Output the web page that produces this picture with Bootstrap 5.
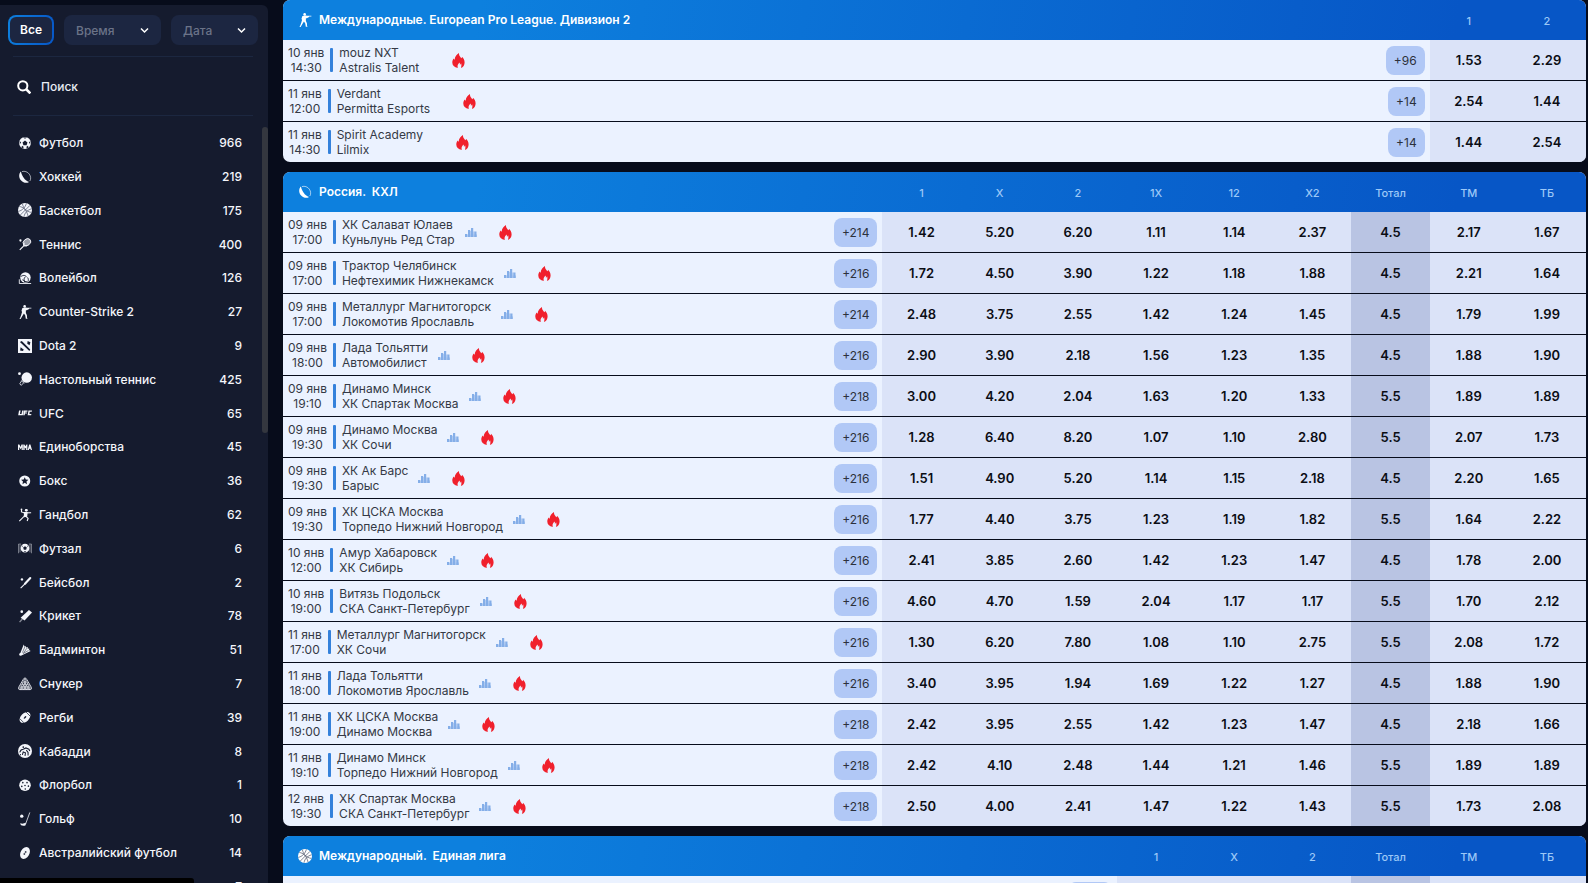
<!DOCTYPE html>
<html lang="ru" data-bs-theme="light">
<head>
<meta charset="utf-8">
<meta name="viewport" content="width=device-width, initial-scale=1">
<title>Линия</title>
<link href="https://cdn.jsdelivr.net/npm/bootstrap@5.3.0/dist/css/bootstrap.min.css" rel="stylesheet">
<style>
  body { background: #070c1b; font-family: Inter, "Liberation Sans", sans-serif; font-size: 12px; height: 100vh; overflow: hidden; }
  a { color: inherit; text-decoration: none; }
  .layout { height: 100vh; }

  .sports-panel { width: 268px; margin-top: 5px; background: #151b2e; border-top-right-radius: 6px; color: #f4f6fb; overflow: hidden; }
  .filters { padding: 10px 10px 11px 8px; gap: 10px; }
  .filters .btn, .filters .form-select { height: 30px; font-size: 12px; font-weight: 500; line-height: 16px; border-radius: 8px; }
  .filters .btn { width: 46px; padding: 0; color: #fff; border: 2px solid transparent; font-weight: 600;
    background: linear-gradient(#1c2641, #1c2641) padding-box, linear-gradient(100deg, #0d80de, #0756c6) border-box; }
  .filters .form-select { border: 0; padding: 1px 12px 0; color: #6b7388; background-color: #1c2641; background-position: right 12px center; background-size: 9px 7px;
    background-image: url("data:image/svg+xml,%3Csvg xmlns='http://www.w3.org/2000/svg' viewBox='0 0 9 7'%3E%3Cpath d='M1 1.5 4.5 5 8 1.5' fill='none' stroke='%23fff' stroke-width='1.5'/%3E%3C/svg%3E"); }
  .sel-time { width: 97px; }
  .sel-date { width: 87px; }
  .search-row { margin: 0 15px 0 13px; height: 60px; padding: 2px 0 0 4px; gap: 10px; border: solid #1c2740; border-width: 1px 0; }
  .search-row input { background: none; border: 0; outline: 0; color: #fff; font-size: 12px; font-weight: 500; padding: 0; min-width: 0; }
  .search-row input::placeholder { color: #e9ecf4; opacity: 1; }
  .sports-scroll { margin-top: 10px; }
  .sport-link { padding: 0 26px 0 18px; line-height: 2.6; font-size: 13px; font-weight: 500; }
  .sport-link::before { content: ""; height: 2.6em; }
  .sport-name, .sport-count { font-size: 12px; }
  .sport-link svg, .league-title svg { width: 14px; height: 14px; flex: none; fill: currentColor; stroke: none; }
  .sport-link svg { margin-right: 7px; }
  .scroll-thumb { top: 1px; right: 0; width: 6px; height: 306px; border-radius: 3px; background: #34373f; }
  .status-strip { left: 0; bottom: 0; width: 194px; height: 5px; background: #000; border-top-right-radius: 3px; }

  .board { margin: 0 2px 0 15px; gap: 10px; overflow: hidden; min-width: 0; }
  .league { border-radius: 7px; overflow: hidden; background: #ebf2ff; flex: none; }
  .league table { width: 100%; table-layout: fixed; border-collapse: separate; border-spacing: 0; }
  .league thead { background: linear-gradient(100deg, #0d80de 15%, #0756c6 90%); }
  .league th { height: 40px; padding: 3px 0 0; text-align: center; font-size: 11px; font-weight: 500; color: #9cc8f7; }
  .league th:first-child { padding: 0 0 0 15px; text-align: left; font-size: 12px; font-weight: 600; color: #fff; }
  .league-title { gap: 7px; white-space: pre; }
  .league td { height: 41px; padding: 0; border-bottom: 1px solid #070c1b; }
  .league tr:last-child td { height: 40px; border-bottom: 0; }
  .c-odd { width: 6%; }
  td.odd { background: #dbe3f8; text-align: center; }
  td.odd.total { background: #b9c4e3; }
  td.odd button { border: 0; background: none; width: 100%; padding: 2px 0 0; font-size: 13px; font-weight: 600; line-height: 16px; color: #0b0d14; }
  .event { padding: 0 5px; color: #343945; font-weight: 400; line-height: 15px; }
  .event time { text-align: center; }
  .event .bar { width: 3px; height: 24px; margin: 0 6px; border-radius: 1px; background: #3481db; }
  .event .stat { width: 12px; height: 10px; margin-left: 10px; fill: #84aee8; }
  .event .fire { width: 13px; height: 15px; margin-left: 22px; fill: #f0202c; }
  .event .no-stat { margin-left: 33px; }
  .more { padding: 0 8px; height: 29px; border: 0; border-radius: 8px; background: #b1c8f6; color: #2c313c; font-size: 12px; line-height: 29px; }
</style>
</head>
<body>
<svg class="d-none">
  <symbol id="i-football" viewBox="0 0 16 16"><path fill-rule="evenodd" d="M8 1.2a6.800 6.800 0 1 1 0 13.600A6.800 6.800 0 0 1 8 1.200Zm0 4L5.200 7.300l1 3.200h3.600l1-3.200ZM6 1.800 8 3.200l2-1.400ZM2 6.100 3.600 7 2.100 9.500Zm12 0L12.400 7l1.500 2.500ZM4 13l.6-2 1.800 1.200-.4 2Zm8 0-.6-2-1.800 1.200.4 2Z"/></symbol>
  <symbol id="i-hockey" viewBox="0 0 16 16"><path d="M3.400 1.600C.8 3.600.6 9 3.600 12c2.600 2.900 6.600 3.400 9 1.600-2.600-.8-4.600-2.400-6.100-4.700C5 6.600 3.800 4.300 3.400 1.600Z"/><path d="M4.500 1.800c3-1 6.600.3 8.400 2.900 2 2.700 2 6 .6 7.900" fill="none" stroke="currentColor" stroke-width=".7"/></symbol>
  <symbol id="i-basket" viewBox="0 0 16 16"><circle cx="8" cy="8" r="8"/><path d="M1.500 4c4 .3 8.500 4 10 11M5 .8c1 5 4.500 9 10.300 10M2.600 13.800 13.800 2.600M.5 9.500c4-.7 8-4.500 9-9M7 15.500c.4-4 4-7.800 8.500-8.800" fill="none" stroke="#4a5268" stroke-width=".8"/></symbol>
  <symbol id="i-tennis" viewBox="0 0 16 16"><circle cx="2.800" cy="4" r="1.300"/><ellipse cx="10.200" cy="6" rx="4.700" ry="3.700" transform="rotate(-40 10.200 6)" fill-opacity=".6" stroke="currentColor"/><path d="M7.200 9.600 2 14.800M7 6.500l-.6 3.800 4-.6" fill="none" stroke="currentColor" stroke-width="1.300"/></symbol>
  <symbol id="i-volley" viewBox="0 0 16 16"><circle cx="8.500" cy="7.500" r="6"/><path d="M3 6.500c3-2 5-2 7 .5M8 7c-1.500 2-1.500 4 0 6M5 10c2 1 3 2.500 6 2.500M11 7.500c1 1.500 1 3 .5 4.500" fill="none" stroke="#151b2e" stroke-width="1.100"/><path d="M1.500 9.500v4.800H15" fill="none" stroke="currentColor"/></symbol>
  <symbol id="i-cs" viewBox="0 0 16 16"><circle cx="7.600" cy="1.600" r="1.500"/><path d="M5 3.300 9 2.800l1.300.2h5v.9h-2.600v.7L10 6.100 9 6v3l1.200 2.600.2 3.400 1 .8H8.900L8.300 12 6.800 9.800 5 12.600 3 16H1.700l1-2 1-3L4.600 8 4 6.500Z"/></symbol>
  <symbol id="i-dota" viewBox="0 0 16 16"><path fill-rule="evenodd" d="M0 0h16v16H0ZM2.200 3.500 13 13.600l1-1.500L4.300 2.400ZM11 2.300l-.4 3 2.600 1.800 1-3.500ZM3 9.500l-.6 3.600 3 .5 1.300-1.400Z"/></symbol>
  <symbol id="i-pong" viewBox="0 0 16 16"><circle cx="1.700" cy="1.900" r="1.600"/><circle cx="10" cy="6.400" r="6"/><path d="M4.500 9.500 2 13.500l1.700 1.800 3-3.200M4 10l3 3" fill="none" stroke="currentColor" stroke-width=".9"/></symbol>
  <symbol id="i-ufc" viewBox="0 0 16 16"><path d="M1.200 5.200H3L2.200 9H4l.8-3.800h1.700L5.500 10.500H.2ZM6.900 5.200h4l-.3 1.300H8.500l-.2.900h2.100l-.3 1.200H8l-.4 1.900H5.900ZM12 5.200h4l-.3 1.300h-2.300L13 9.200h2.300l-.3 1.300h-4Z"/></symbol>
  <symbol id="i-mma" viewBox="0 0 16 16"><path d="M0 11.500V5h1.500L3 8l1-3h1.500v6.500H4.200V8.500L3 10.500 1.400 8v3.500ZM6 11.500V5h1.300l1.200 2L9.700 5h1v6.500H9.300v-3l-.8 1.300-.9-1.300v3ZM11 11.500 12.800 5h1.400L16 11.500h-1.400l-.4-1.500h-1.400l-.4 1.500Z"/></symbol>
  <symbol id="i-box" viewBox="0 0 16 16"><path fill-rule="evenodd" d="M7.700 1.700a6.300 6.300 0 1 1 0 12.600 6.300 6.300 0 0 1 0-12.600Zm0 2-1.200 2.700-3 .3 2.200 2-.6 3 2.600-1.600 2.600 1.600-.6-3 2.200-2-3-.3Z"/></symbol>
  <symbol id="i-hand" viewBox="0 0 16 16"><circle cx="4" cy="1.500" r="1"/><circle cx="9.500" cy="2.600" r="1.600"/><path d="M4 1.500v3l4 1.300L7 9.500 1.500 15M8 5.500l7-.1M9 5v4.500l2.500 2.300-1 3" fill="none" stroke="currentColor" stroke-width="1.300"/><path d="M6.500 4.500 11 4.600 10.500 10 7 10.500Z"/></symbol>
  <symbol id="i-futsal" viewBox="0 0 16 16"><path fill-rule="evenodd" d="M8 3.200a5 5 0 1 1 0 10 5 5 0 0 1 0-10Zm0 2.800L5.900 7.500l.8 2.500h2.600l.8-2.500ZM4.200 6l1.200-.8-.5 2ZM11.800 6l-1.200-.8.5 2ZM6.500 12.600 8 11.500l1.500 1.100Z"/><path d="M.6 14V3.500h3M15.400 14V3.500h-3M2.300 4v9M13.700 4v9" fill="none" stroke="currentColor" stroke-opacity=".5"/></symbol>
  <symbol id="i-base" viewBox="0 0 16 16"><circle cx="4.500" cy="5" r="1.400"/><path d="M14 3.500 8 10" stroke="currentColor" stroke-width="2.400" stroke-linecap="round"/><path d="M8.500 9.500 3 15" stroke="currentColor" stroke-width="1.300"/></symbol>
  <symbol id="i-cricket" viewBox="0 0 16 16"><circle cx="4.300" cy="3" r="1.500"/><path d="M12.500 1 16 4 7.500 13 3 10Z"/><path d="M5 11.500 1.800 15" stroke="currentColor" stroke-width="1.600" stroke-opacity=".5"/></symbol>
  <symbol id="i-badm" viewBox="0 0 16 16"><path d="M6.500 1.800 2.500 12l2 2L14.500 9l-2-1 .6-1.500-2.100-.3.200-1.500-2 .3-.3-1.500-1.400.5Z"/><path d="m5 11 3-7M6 12l4-6M6 12l6-3.500" stroke="#151b2e" stroke-width=".6"/><circle cx="3" cy="13" r="1.600"/></symbol>
  <symbol id="i-snooker" viewBox="0 0 16 16"><path d="M8 1.200c1 0 1.400.4 1.900 1.400l5.300 9.200c.8 1.500.2 2.600-1.300 2.600H2.100c-1.500 0-2.100-1.100-1.300-2.600l5.300-9.200C6.600 1.600 7 1.200 8 1.200Z" fill="none" stroke="currentColor"/><g fill="none" stroke="currentColor" stroke-width="1"><circle cx="8" cy="4.200" r="1.300"/><circle cx="6.400" cy="7.100" r="1.300"/><circle cx="9.600" cy="7.100" r="1.300"/><circle cx="4.800" cy="9.900" r="1.300"/><circle cx="8" cy="9.900" r="1.300"/><circle cx="11.200" cy="9.900" r="1.300"/><circle cx="3.200" cy="12.600" r="1.200"/><circle cx="6.400" cy="12.600" r="1.200"/><circle cx="9.600" cy="12.600" r="1.200"/><circle cx="12.800" cy="12.600" r="1.200"/></g></symbol>
  <symbol id="i-rugby" viewBox="0 0 16 16"><g transform="rotate(-45 8 8.500)"><ellipse cx="8" cy="8.500" rx="7.300" ry="4.800"/><path d="M2.800 5v7M13.200 5v7" fill="none" stroke="#151b2e" stroke-width=".8"/><ellipse cx="8" cy="8.500" rx="1.900" ry=".9" fill="#151b2e"/></g></symbol>
  <symbol id="i-kabaddi" viewBox="0 0 16 16"><circle cx="8" cy="8" r="8"/><path d="M2 9.500c.8-2.500 2.500-3.500 4-3.500l3-1.500 3.500 1.500 1 2M5 12.500l1-3.500 2.500 1-.5 3.500M9.500 7l2 2.500v3.500M3 11.500 2.500 13" fill="none" stroke="#151b2e" stroke-width="1.200"/><circle cx="6" cy="3.500" r="1" fill="#151b2e"/></symbol>
  <symbol id="i-floor" viewBox="0 0 16 16"><circle cx="8" cy="8.300" r="6.600"/><g fill="#151b2e"><circle cx="5.500" cy="5.300" r=".9"/><circle cx="10.300" cy="5.300" r=".9"/><circle cx="4.300" cy="9.600" r=".9"/><circle cx="8" cy="8.600" r=".9"/><circle cx="11.900" cy="9.300" r=".9"/><circle cx="8.300" cy="12.600" r=".9"/></g></symbol>
  <symbol id="i-golf" viewBox="0 0 16 16"><circle cx="4.300" cy="4.800" r="1.900"/><path d="M13.500.5 8.600 14" stroke="currentColor" stroke-width=".9"/><path d="M2.500 12.800c2 .8 4 .7 6.500-.4l-.3 2.600c-2 1.200-6.200.8-6.200-2.200Z"/></symbol>
  <symbol id="i-aussie" viewBox="0 0 16 16"><g transform="rotate(-60 8 8)"><ellipse cx="8" cy="8" rx="7.200" ry="5"/><path d="M5.500 8h5M6.500 7v2M9.500 7v2" stroke="#151b2e" stroke-width=".8"/></g></symbol>
  <symbol id="i-fire" viewBox="0 0 13 15"><path d="M7 0c-.1 1.600.3 2.500 1 3.400.5.700 1 1.200 1.300 1.800.5-.3.700-.8.7-1.500 1.600 1.600 2.600 3.500 2.600 5.700 0 2.600-1.300 4.600-3.700 5.500.6-1.500.7-3 .2-4.600-.3.800-.6 1.200-1.200 1.500.1-.8 0-1.500-.4-2.200-1.200 1.300-2.100 2.500-1.900 4.400 0 .4.100.7.300 1C2.200 14.300.3 12.200.3 9.500c0-1.700.6-2.900 1.500-4 .1.600.4 1 .8 1.200C2.900 3.600 4.600 1.500 7 0Z"/></symbol>
  <symbol id="i-stat" viewBox="0 0 12 10"><path d="M0 7h2.200v3H0zM3 3h2.200v7H3zM6 1h2.200v9H6zM9.300 4.500h2.200V10H9.300z"/><path d="M2.200 7.500h9.800V10H2.200zM5.200 4H6v6h-.8zM8.200 4.500h1.100V10H8.200z" fill-opacity=".6"/></symbol>
</svg>

<div class="layout d-flex">
  <aside class="sports-panel d-flex flex-column flex-shrink-0">
    <div class="filters d-flex">
      <button type="button" class="btn">Все</button>
      <select class="form-select sel-time" aria-label="Время"><option>Время</option></select>
      <select class="form-select sel-date" aria-label="Дата"><option>Дата</option></select>
    </div>
    <label class="search-row d-flex align-items-center flex-shrink-0">
      <svg width="14" height="14" viewBox="0 0 14 14" fill="none" stroke="#fff" stroke-width="2"><circle cx="5.800" cy="5.800" r="4.600"/><path d="m9 9 4.400 4.400" stroke-width="2.600"/></svg>
      <input type="search" class="flex-fill" placeholder="Поиск" aria-label="Поиск">
    </label>
    <div class="sports-scroll position-relative flex-fill">
      <nav id="sports" aria-label="Виды спорта"></nav>
      <div class="scroll-thumb position-absolute"></div>
    </div>
  </aside>
  <main id="board" class="board d-flex flex-column flex-fill"></main>
</div>
<div class="status-strip position-absolute"></div>

<script src="https://cdn.jsdelivr.net/npm/bootstrap@5.3.0/dist/js/bootstrap.bundle.min.js"></script>
<script>
const sports = [
  ['football','Футбол',966],['hockey','Хоккей',219],['basket','Баскетбол',175],['tennis','Теннис',400],
  ['volley','Волейбол',126],['cs','Counter-Strike 2',27],['dota','Dota 2',9],['pong','Настольный теннис',425],
  ['ufc','UFC',65],['mma','Единоборства',45],['box','Бокс',36],['hand','Гандбол',62],['futsal','Футзал',6],
  ['base','Бейсбол',2],['cricket','Крикет',78],['badm','Бадминтон',51],['snooker','Снукер',7],['rugby','Регби',39],
  ['kabaddi','Кабадди',8],['floor','Флорбол',1],['golf','Гольф',10],['aussie','Австралийский футбол',14],['','',7]
];
// Each event: date, time, team 1, team 2, extra markets, odds
const leagues = [
  { icon:'cs', title:'Международные. European Pro League. Дивизион 2', stat:false, cols:['1','2'], events:[
    '10 янв|14:30|mouz NXT|Astralis Talent|96|1.53 2.29',
    '11 янв|12:00|Verdant|Permitta Esports|14|2.54 1.44',
    '11 янв|14:30|Spirit Academy|Lilmix|14|1.44 2.54' ]},
  { icon:'hockey', title:'Россия.  КХЛ', stat:true, cols:['1','X','2','1X','12','X2','Тотал','ТМ','ТБ'], events:[
    '09 янв|17:00|ХК Салават Юлаев|Куньлунь Ред Стар|214|1.42 5.20 6.20 1.11 1.14 2.37 4.5 2.17 1.67',
    '09 янв|17:00|Трактор Челябинск|Нефтехимик Нижнекамск|216|1.72 4.50 3.90 1.22 1.18 1.88 4.5 2.21 1.64',
    '09 янв|17:00|Металлург Магнитогорск|Локомотив Ярославль|214|2.48 3.75 2.55 1.42 1.24 1.45 4.5 1.79 1.99',
    '09 янв|18:00|Лада Тольятти|Автомобилист|216|2.90 3.90 2.18 1.56 1.23 1.35 4.5 1.88 1.90',
    '09 янв|19:10|Динамо Минск|ХК Спартак Москва|218|3.00 4.20 2.04 1.63 1.20 1.33 5.5 1.89 1.89',
    '09 янв|19:30|Динамо Москва|ХК Сочи|216|1.28 6.40 8.20 1.07 1.10 2.80 5.5 2.07 1.73',
    '09 янв|19:30|ХК Ак Барс|Барыс|216|1.51 4.90 5.20 1.14 1.15 2.18 4.5 2.20 1.65',
    '09 янв|19:30|ХК ЦСКА Москва|Торпедо Нижний Новгород|216|1.77 4.40 3.75 1.23 1.19 1.82 5.5 1.64 2.22',
    '10 янв|12:00|Амур Хабаровск|ХК Сибирь|216|2.41 3.85 2.60 1.42 1.23 1.47 4.5 1.78 2.00',
    '10 янв|19:00|Витязь Подольск|СКА Санкт-Петербург|216|4.60 4.70 1.59 2.04 1.17 1.17 5.5 1.70 2.12',
    '11 янв|17:00|Металлург Магнитогорск|ХК Сочи|216|1.30 6.20 7.80 1.08 1.10 2.75 5.5 2.08 1.72',
    '11 янв|18:00|Лада Тольятти|Локомотив Ярославль|216|3.40 3.95 1.94 1.69 1.22 1.27 4.5 1.88 1.90',
    '11 янв|19:00|ХК ЦСКА Москва|Динамо Москва|218|2.42 3.95 2.55 1.42 1.23 1.47 4.5 2.18 1.66',
    '11 янв|19:10|Динамо Минск|Торпедо Нижний Новгород|218|2.42 4.10 2.48 1.44 1.21 1.46 5.5 1.89 1.89',
    '12 янв|19:30|ХК Спартак Москва|СКА Санкт-Петербург|218|2.50 4.00 2.41 1.47 1.22 1.43 5.5 1.73 2.08' ]},
  { icon:'basket', title:'Международный.  Единая лига', stat:true, cols:['1','X','2','Тотал','ТМ','ТБ'], events:['||||150|     '] }
];
const use = (id, cls = '') => `<svg class="${cls}" aria-hidden="true">${id ? `<use href="#i-${id}"/>` : ''}</svg>`;

document.getElementById('sports').innerHTML = sports.map(([icon, name, n]) =>
  `<a href="#" class="sport-link d-flex align-items-center">${use(icon)}<span class="sport-name flex-fill">${name}</span><span class="sport-count">${n}</span></a>`).join('');

document.getElementById('board').innerHTML = leagues.map(l => {
  const rows = l.events.map(e => {
    const [date, time, a, b, more, odds] = e.split('|');
    const info = date ? `<time>${date}<br>${time}</time><span class="bar"></span><a href="#">${a}<br>${b}</a>
      ${l.stat ? use('stat', 'stat') : ''}${use('fire', l.stat ? 'fire' : 'fire no-stat')}` : '';
    return `<tr><td><div class="event d-flex align-items-center">${info}<button type="button" class="more ms-auto">+${more}</button></div></td>${
      odds.split(' ').map((o, i) => `<td class="odd${l.cols[i] === 'Тотал' ? ' total' : ''}">${o ? `<button type="button">${o}</button>` : ''}</td>`).join('')}</tr>`;
  }).join('');
  return `<section class="league"><table><colgroup><col>${l.cols.map(() => '<col class="c-odd">').join('')}</colgroup>
    <thead><tr><th scope="col"><div class="league-title d-flex align-items-center">${use(l.icon)}<span>${l.title}</span></div></th>${
      l.cols.map(c => `<th scope="col">${c}</th>`).join('')}</tr></thead><tbody>${rows}</tbody></table></section>`;
}).join('');
</script>
</body>
</html>
